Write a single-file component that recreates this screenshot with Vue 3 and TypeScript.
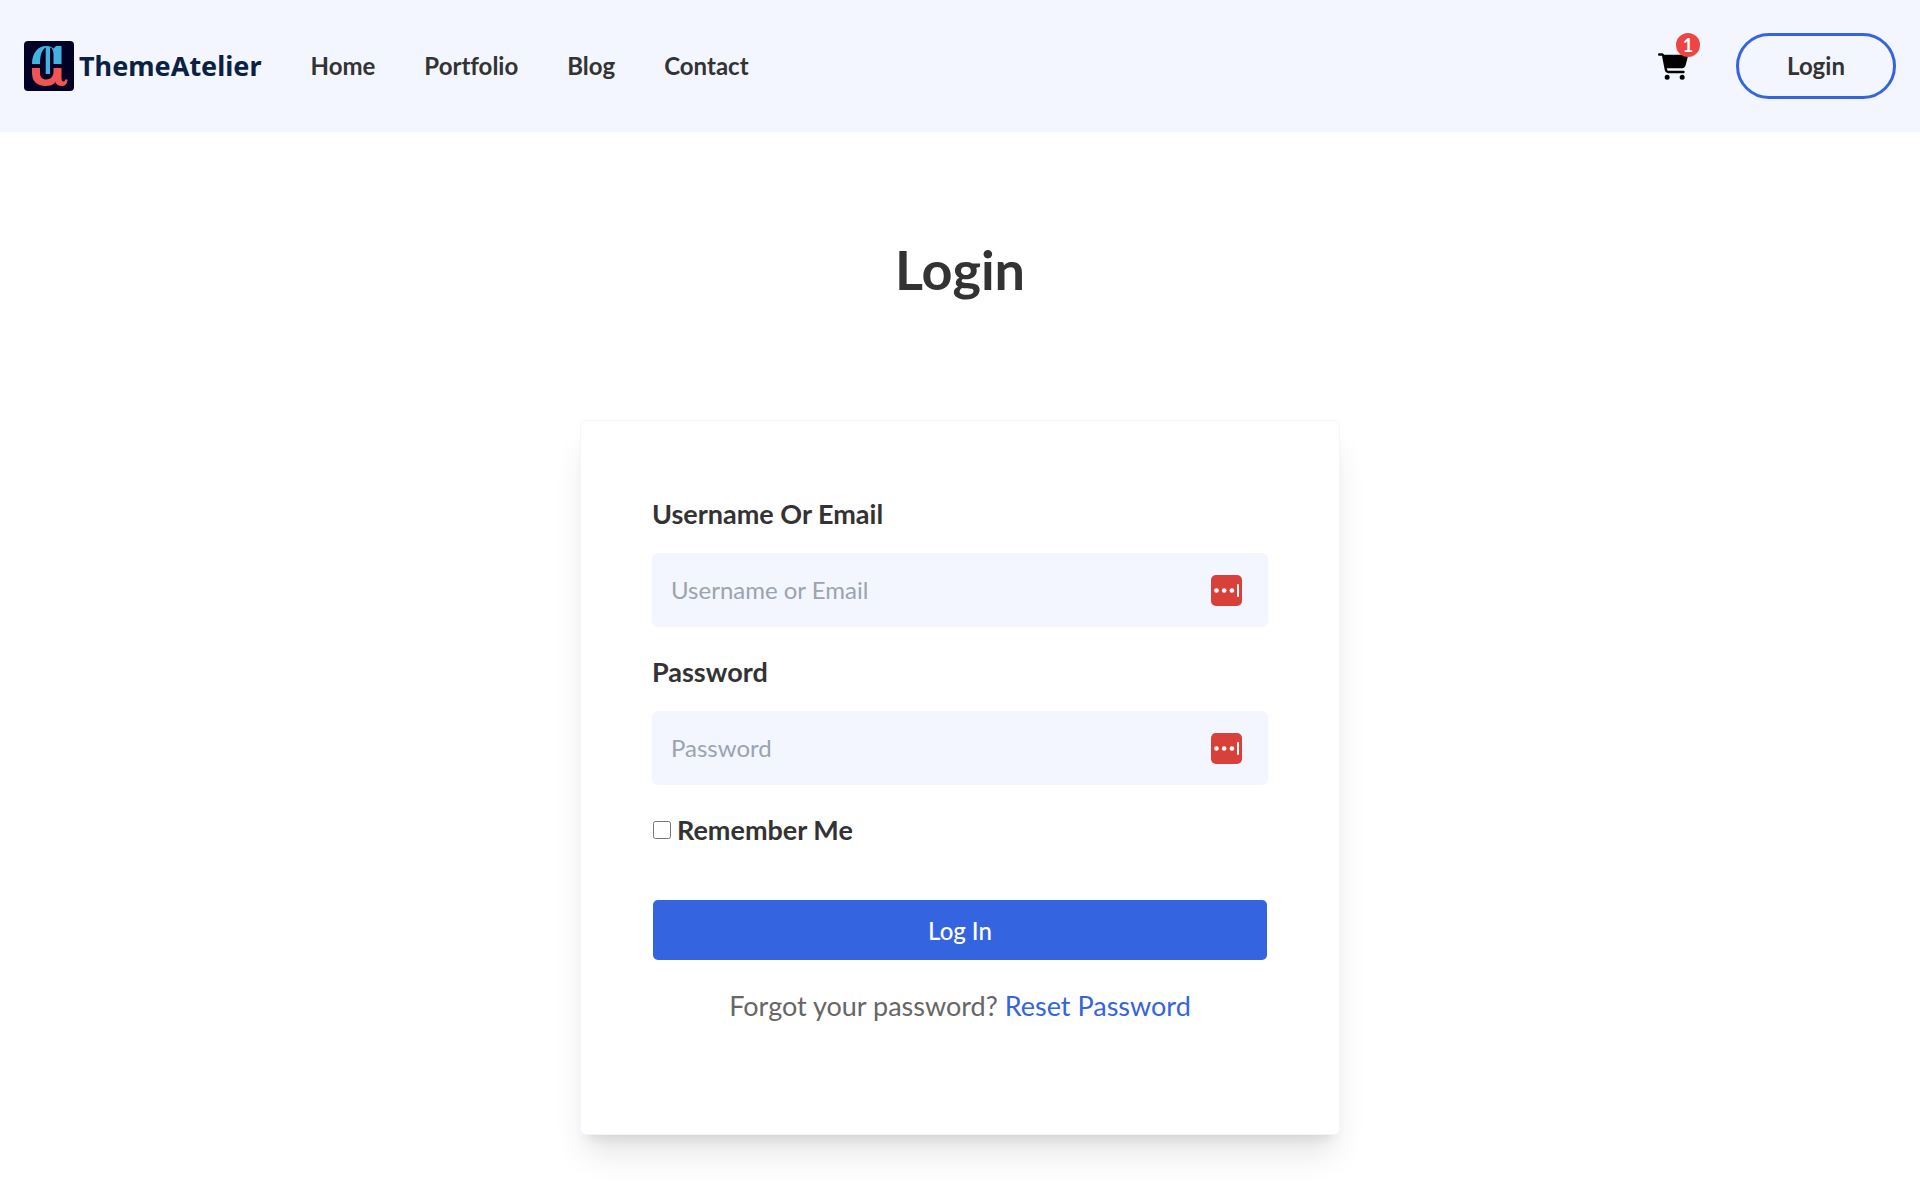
<script setup lang="ts">
import { ref } from 'vue'

interface NavLink {
  label: string
  href: string
}

interface Field {
  id: string
  label: string
  placeholder: string
  type: string
}

const links: NavLink[] = [
  { label: 'Home', href: '#home' },
  { label: 'Portfolio', href: '#portfolio' },
  { label: 'Blog', href: '#blog' },
  { label: 'Contact', href: '#contact' },
]

const fields: Field[] = [
  { id: 'username', label: 'Username Or Email', placeholder: 'Username or Email', type: 'text' },
  { id: 'password', label: 'Password', placeholder: 'Password', type: 'password' },
]

const values = ref<Record<string, string>>({ username: '', password: '' })
const remember = ref(false)
const cartCount = ref(1)
</script>

<template>
  <div class="page">
    <header class="header">
      <a class="brand" href="#home">
        <svg class="brand-mark" viewBox="0 0 50 50" aria-hidden="true">
          <rect width="50" height="50" rx="4" fill="#020024" />
          <path
            d="M8 23C8 12 14 5 22 5c3.500 0 6 .8 7.500 2.500L32 5h5.500v18H29.500V14c0-4-1-7-3.500-7.500V33h-4.300V6.500C18 8.500 16 14 16 23z"
            fill="#41b2e2"
          />
          <path
            d="M8 27h8v5c0 4 2.500 6.500 6 6.500 4.500 0 7.500-3 7.500-7.500v-4h8v10c0 2.500.8 3.500 2 3.500s1.500-.8 1.500-2H43.500c0 4-2 6.500-5.500 6.500-3.500 0-6-1.500-6.500-4-2.500 3-5.500 4-10 4C13 45 8 40 8 32z"
            fill="#f05454"
          />
        </svg>
        <span class="brand-name">ThemeAtelier</span>
      </a>
      <nav class="nav" aria-label="Main">
        <a v-for="link in links" :key="link.label" class="nav-link" :href="link.href">{{ link.label }}</a>
      </nav>
      <a class="cart" href="#cart" aria-label="Cart">
        <svg class="cart-icon" viewBox="0 0 576 512" aria-hidden="true">
          <path
            d="M0 24C0 10.700 10.700 0 24 0H69.500c22 0 41.500 12.800 50.600 32h411c26.300 0 45.500 25 38.600 50.400l-41 152.300c-8.500 31.400-37 53.300-69.500 53.300H170.700l5.400 28.500c2.200 11.300 12.100 19.500 23.600 19.500H488c13.300 0 24 10.700 24 24s-10.700 24-24 24H199.700c-34.600 0-64.300-24.600-70.700-58.500L77.400 54.500c-.7-3.800-4-6.500-7.900-6.500H24C10.700 48 0 37.300 0 24zM128 464a48 48 0 1 1 96 0 48 48 0 1 1-96 0zm336-48a48 48 0 1 1 0 96 48 48 0 1 1 0-96z"
          />
        </svg>
        <span class="cart-badge">{{ cartCount }}</span>
      </a>
      <button class="login-button" type="button">Login</button>
    </header>

    <main class="main">
      <h1 class="title">Login</h1>
      <form class="card" @submit.prevent>
        <div v-for="field in fields" :key="field.id" class="field">
          <label class="label" :for="field.id">{{ field.label }}</label>
          <div class="control">
            <input
              :id="field.id"
              v-model="values[field.id]"
              class="input"
              :type="field.type"
              :placeholder="field.placeholder"
            />
            <svg class="autofill" viewBox="0 0 31 31" aria-hidden="true">
              <rect width="31" height="31" rx="5" fill="#d9403a" />
              <circle cx="5.500" cy="15.500" r="2.300" fill="#fff" />
              <circle cx="13.200" cy="15.500" r="2.300" fill="#fff" />
              <circle cx="20.900" cy="15.500" r="2.300" fill="#fff" />
              <rect x="26" y="9" width="2" height="13" rx="1" fill="#fff" />
            </svg>
          </div>
        </div>
        <div class="remember">
          <input id="remember" v-model="remember" class="checkbox" type="checkbox" />
          <label class="label" for="remember">Remember Me</label>
        </div>
        <div class="actions">
          <button class="submit" type="submit">Log In</button>
        </div>
        <p class="forgot">Forgot your password? <a class="reset" href="#reset">Reset Password</a></p>
      </form>
    </main>
  </div>
</template>

<style>
body {
  margin: 0;
  background: #fff;
}
</style>

<style scoped>
.page {
  font-family: Lato, 'Liberation Sans', sans-serif;
  font-size: 27px;
  line-height: 41px;
  font-variant-ligatures: none;
  color: #333;
}

.header {
  display: flex;
  align-items: center;
  padding: 33px 24px;
  background: #f3f6ff;
}

.brand {
  display: flex;
  align-items: center;
  gap: 5px;
  margin-right: 49px;
  color: #0b2144;
  text-decoration: none;
}

.brand-mark {
  width: 50px;
  height: 50px;
}

.brand-name {
  padding-bottom: 2px;
  font-family: 'Noto Sans', sans-serif;
  font-size: 27px;
  font-weight: 700;
}

.nav {
  display: flex;
  gap: 49px;
  padding-bottom: 2px;
}

.nav-link {
  font-size: 24px;
  font-weight: 700;
  color: #333;
  text-decoration: none;
}

.cart {
  position: relative;
  display: flex;
  margin-left: auto;
  margin-right: 48px;
}

.cart-icon {
  width: 30px;
  height: 27px;
}

.cart-badge {
  position: absolute;
  top: -20px;
  right: -12px;
  width: 24px;
  height: 24px;
  border-radius: 50%;
  background: #ef4444;
  color: #fff;
  font-size: 18px;
  font-weight: 700;
  line-height: 24px;
  text-align: center;
}

.login-button {
  width: 160px;
  height: 66px;
  padding: 0 0 2px;
  border: 3px solid #3464e0;
  border-radius: 33px;
  background: transparent;
  color: #333;
  font: 700 24px Lato, sans-serif;
}

.main {
  display: flex;
  flex-direction: column;
  align-items: center;
  padding: 106px 24px 48px;
}

.title {
  margin: 0 0 118px;
  font-size: 54px;
  font-weight: 700;
  line-height: 64px;
}

.card {
  box-sizing: border-box;
  width: 100%;
  max-width: 760px;
  padding: 72px 71px 108px;
  border: 1px solid #f3f6ff;
  border-radius: 6px;
  background: #fff;
  box-shadow: 0 24px 30px -6px rgba(0, 0, 0, 0.1), 0 10px 12px -7px rgba(0, 0, 0, 0.1);
}

.field {
  margin-bottom: 24px;
}

.label {
  font-weight: 700;
}

.field .label {
  display: block;
  margin-bottom: 19px;
}

.control {
  position: relative;
  display: flex;
}

.input {
  box-sizing: border-box;
  width: 100%;
  height: 74px;
  padding: 0 72px 2px 19px;
  border: 0;
  border-radius: 6px;
  background: #f3f6ff;
  color: #333;
  font: 400 24px Lato, sans-serif;
}

.input::placeholder {
  color: #9ca3af;
}

.autofill {
  position: absolute;
  top: 22px;
  right: 26px;
  width: 31px;
  height: 31px;
}

.remember {
  display: flex;
  align-items: center;
  gap: 6px;
  margin-bottom: 50px;
}

.checkbox {
  width: 18px;
  height: 18px;
  margin: 0 0 0 1px;
}

.actions {
  padding: 0 1px;
}

.submit {
  display: block;
  width: 100%;
  height: 60px;
  padding: 0;
  border: 0;
  border-radius: 5px;
  background: #3464e0;
  color: #fff;
  font: 500 24px Lato, sans-serif;
}

.forgot {
  margin: 25px 0 0;
  color: #666;
  text-align: center;
}

.reset {
  color: #3464e0;
  text-decoration: none;
}
</style>
